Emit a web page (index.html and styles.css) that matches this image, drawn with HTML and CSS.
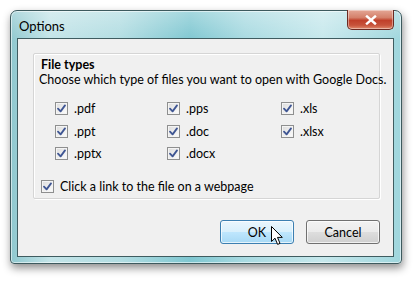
FILE: index.html
```html
<!DOCTYPE html>
<html lang="en">
<head>
  <meta charset="UTF-8" />
  <title>Options</title>
  <link rel="stylesheet" href="styles.css">
</head>
<body>
  <svg width="0" height="0" style="position:absolute">
    <symbol id="tick" viewBox="0 0 9 9">
      <path d="M1 4.6 L3.6 7.4 L8 1.4" fill="none" stroke="#3f5693" stroke-width="1.8" stroke-linejoin="round" stroke-linecap="round"/>
    </symbol>
  </svg>

  <div class="window">
    <div class="titlebar">
      <span class="title">Options</span>
      <button class="close">
        <svg width="12" height="10" viewBox="0 0 12 10"><path d="M2 1.5 L10 8.5 M10 1.5 L2 8.5" stroke="#fff" stroke-width="2.4" stroke-linecap="square"/></svg>
      </button>
    </div>

    <div class="client">
      <div class="group">
        <div class="group-title">File types</div>
        <div class="group-desc">Choose which type of files you want to open with Google Docs.</div>

        <div class="types">
          <label class="check"><span class="cb"><svg><use href="#tick"/></svg></span>.pdf</label>
          <label class="check"><span class="cb"><svg><use href="#tick"/></svg></span>.pps</label>
          <label class="check"><span class="cb"><svg><use href="#tick"/></svg></span>.xls</label>
          <label class="check"><span class="cb"><svg><use href="#tick"/></svg></span>.ppt</label>
          <label class="check"><span class="cb"><svg><use href="#tick"/></svg></span>.doc</label>
          <label class="check"><span class="cb"><svg><use href="#tick"/></svg></span>.xlsx</label>
          <label class="check"><span class="cb"><svg><use href="#tick"/></svg></span>.pptx</label>
          <label class="check"><span class="cb"><svg><use href="#tick"/></svg></span>.docx</label>
        </div>

        <label class="check link-check"><span class="cb"><svg><use href="#tick"/></svg></span>Click a link to the file on a webpage</label>
      </div>

      <div class="buttons">
        <button class="btn hover">OK</button>
        <button class="btn">Cancel</button>
      </div>
    </div>
  </div>

  <!-- mouse pointer over OK -->
  <svg class="cursor" width="13" height="20" viewBox="0 0 13 20">
    <path d="M0.5 0.5 L0.5 15.5 L4 12.2 L6.6 18.4 L9 17.4 L6.5 11.4 L11.3 11.4 Z" fill="#fff" stroke="#000" stroke-width="1" stroke-linejoin="miter"/>
  </svg>
</body>
</html>
```

FILE: styles.css
```css
* { box-sizing: border-box; }

body {
  margin: 0;
  background: #fff;
  font-family: Lato, 'Open Sans', sans-serif;
  font-size: 12.5px;
  color: #000;
  position: relative;
  width: 420px;
  height: 283px;
  overflow: hidden;
}

.window {
  margin: 10px 0 0 10px;
  width: 392px;
  height: 254px;
  display: flex;
  flex-direction: column;
  padding: 0 7px 6px 6px;
  border: 1px solid #3d5a5e;
  border-radius: 7px 7px 4px 4px;
  background:
    linear-gradient(180deg, rgba(255,255,255,0.3), rgba(255,255,255,0) 30px),
    linear-gradient(90deg, #8fc8cf 0%, #c3e4e8 10%, #b2dde2 28%, #7fc7d1 46%, #a8dae1 60%, #c6e8ec 80%, #9fd6dd 100%);
  box-shadow: 1px 4px 9px rgba(0,0,0,0.45), inset 0 0 0 1px rgba(255,255,255,0.55);
}

.titlebar {
  height: 27px;
  display: flex;
  align-items: flex-start;
  justify-content: space-between;
}

.title {
  margin: 7px 0 0 2px;
  font-size: 13px;
  color: #000;
}

.close {
  width: 47px;
  height: 20px;
  margin-top: -1px;
  border: 1px solid #6b2a22;
  border-top: none;
  border-radius: 0 0 5px 5px;
  background: linear-gradient(180deg, #e4a796 0%, #d4806a 40%, #c0402a 55%, #c7533b 80%, #e08a6c 100%);
  box-shadow: inset 0 0 0 1px rgba(255,255,255,0.4);
  display: flex;
  align-items: center;
  justify-content: center;
  padding: 0;
}

.client {
  flex: 1;
  background: #f0f0f0;
  border: 1px solid #3f5c60;
  display: flex;
  flex-direction: column;
  padding: 14px 13px 0 15px;
}

.group {
  height: 146px;
  border: 1px solid #d5d5d5;
  border-radius: 2px;
  box-shadow: inset 1px 1px 0 #fff, 1px 1px 0 #fff;
  padding: 3px 6px 0 5px;
}

.group-title {
  font-weight: bold;
  line-height: 15px;
  padding-left: 2px;
}

.group-desc {
  line-height: 16px;
  white-space: nowrap;
}

.types {
  display: grid;
  grid-template-columns: 112px 114px auto;
  grid-auto-rows: 22.5px;
  margin: 14px 0 0 16px;
}

.check {
  display: flex;
  align-items: center;
  gap: 6px;
  height: 13px;
}

.cb {
  width: 13px;
  height: 13px;
  border: 1px solid #8e8f8f;
  background: linear-gradient(135deg, #dcdcdc, #fdfdfd);
  box-shadow: inset 0 0 0 1px #f4f4f4;
  display: flex;
  align-items: center;
  justify-content: center;
  flex: none;
}

.cb svg {
  width: 9px;
  height: 9px;
}

.link-check {
  margin: 10px 0 0 2px;
}

.buttons {
  display: flex;
  justify-content: flex-end;
  gap: 12px;
  margin-top: 21px;
}

.btn {
  width: 74px;
  height: 24px;
  font-family: inherit;
  font-size: 12.5px;
  color: #000;
  border: 1px solid #707070;
  border-radius: 3px;
  background: linear-gradient(180deg, #f2f2f2 0%, #ebebeb 48%, #dddddd 52%, #cfcfcf 100%);
  box-shadow: inset 0 0 0 1px rgba(255,255,255,0.7);
  padding: 0;
}

.btn.hover {
  border-color: #3c7fb1;
  background: linear-gradient(180deg, #eaf6fd 0%, #d9f0fc 48%, #bee6fd 52%, #a7d9f5 100%);
}

.cursor {
  position: absolute;
  left: 271px;
  top: 226px;
}
```
